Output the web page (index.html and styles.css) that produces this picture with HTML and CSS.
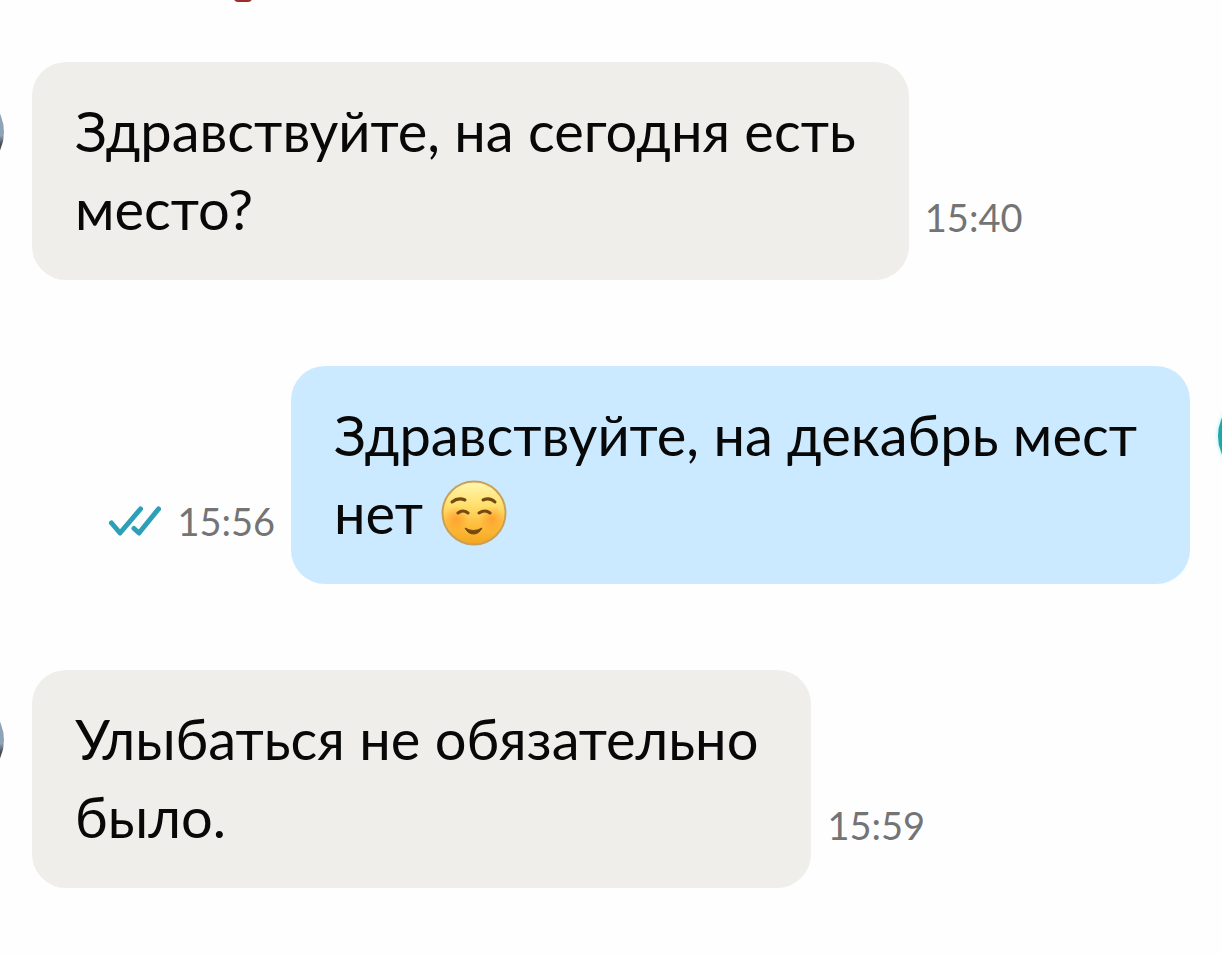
FILE: index.html
```html
<!DOCTYPE html>
<html lang="ru">
<head>
<meta charset="utf-8">
<title>Чат</title>
<link rel="stylesheet" href="styles.css">
</head>
<body>
<div class="badge"></div>
<main class="chat">
  <article class="message">
    <div class="avatar"></div>
    <p class="bubble">Здравствуйте, на сегодня есть<br>место?</p>
    <time class="time">15:40</time>
  </article>
  <article class="message message-own">
    <div class="avatar avatar-own"></div>
    <p class="bubble bubble-own">Здравствуйте, на декабрь мест<br>нет
      <svg class="emoji" viewBox="0 0 66 66" role="img" aria-label="☺️">
        <defs>
          <linearGradient id="face" x1="0" y1="0" x2="0" y2="1">
            <stop offset="0" stop-color="#fff7b0"/>
            <stop offset=".35" stop-color="#ffe272"/>
            <stop offset=".7" stop-color="#fdbd3c"/>
            <stop offset="1" stop-color="#f5a620"/>
          </linearGradient>
          <radialGradient id="cheek">
            <stop offset="0" stop-color="#ff8a1c" stop-opacity=".6"/>
            <stop offset="1" stop-color="#ff8a1c" stop-opacity="0"/>
          </radialGradient>
        </defs>
        <circle cx="33" cy="33" r="31.5" fill="url(#face)" stroke="#c9a055" stroke-width="2"/>
        <circle cx="15" cy="39" r="13" fill="url(#cheek)"/>
        <circle cx="51" cy="39" r="13" fill="url(#cheek)"/>
        <g fill="none" stroke="#75490f" stroke-width="3" stroke-linecap="round">
          <path d="M11 22Q17 17 24 20"/>
          <path d="M42 20Q49 17 54 22"/>
          <path d="M17 33Q22 29 27 33"/>
          <path d="M38 33Q44 29 49 33"/>
        </g>
        <path d="M24 48Q32.500 53 41 48Q38 54 32.500 54Q27 54 24 48Z" fill="#75490f" stroke="#75490f" stroke-linejoin="round"/>
      </svg></p>
    <time class="time">15:56</time>
    <svg class="checks" viewBox="0 0 52 30" role="img" aria-label="Прочитано">
      <path d="M2.500 17L11 27L31.500 3M25 22.500L30 27L49.500 3"/>
    </svg>
  </article>
  <article class="message">
    <div class="avatar"></div>
    <p class="bubble">Улыбаться не обязательно<br>было.</p>
    <time class="time">15:59</time>
  </article>
</main>
</body>
</html>
```
FILE: styles.css
```css
* {
  box-sizing: border-box;
}

body {
  margin: 0;
  background: #fefefe;
  color: #080808;
  font-family: Lato, "Open Sans", sans-serif;
  overflow-x: hidden;
}

.badge {
  position: absolute;
  top: -14px;
  left: 234px;
  width: 18px;
  height: 16px;
  border-radius: 4px;
  background: #a02c28;
}

.chat {
  display: flex;
  flex-direction: column;
  gap: 86px;
  padding: 62px 0 66px;
  overflow: hidden;
}

.message {
  display: flex;
  align-items: flex-end;
  gap: 16px;
}

.message-own {
  flex-direction: row-reverse;
}

.avatar {
  flex: none;
  align-self: flex-start;
  width: 88px;
  height: 88px;
  margin: 26px 12px 0 -84px;
  border-radius: 50%;
  background: linear-gradient(#8ea3b5 54%, #4b4a55 64%);
}

.avatar-own {
  margin: 26px -84px 0 12px;
  background: #22a5a8;
  box-shadow: 0 0 4px #9ff0f2;
}

.bubble {
  margin: 0;
  padding: 30px 53px 32px 43px;
  border-radius: 34px;
  background: #efeeea;
  font-size: 56px;
  line-height: 78px;
}

.bubble-own {
  background: #cbeaff;
}

.time {
  padding-bottom: 40px;
  color: #747474;
  font-size: 38px;
  line-height: 46px;
}

.emoji {
  width: 66px;
  height: 66px;
  margin: -8px 0 -8px 4px;
  vertical-align: -4px;
}

.checks {
  width: 52px;
  height: 30px;
  margin-bottom: 48px;
  fill: none;
  stroke: #2e9fb8;
  stroke-width: 5;
  stroke-linecap: round;
  stroke-linejoin: round;
}
```
